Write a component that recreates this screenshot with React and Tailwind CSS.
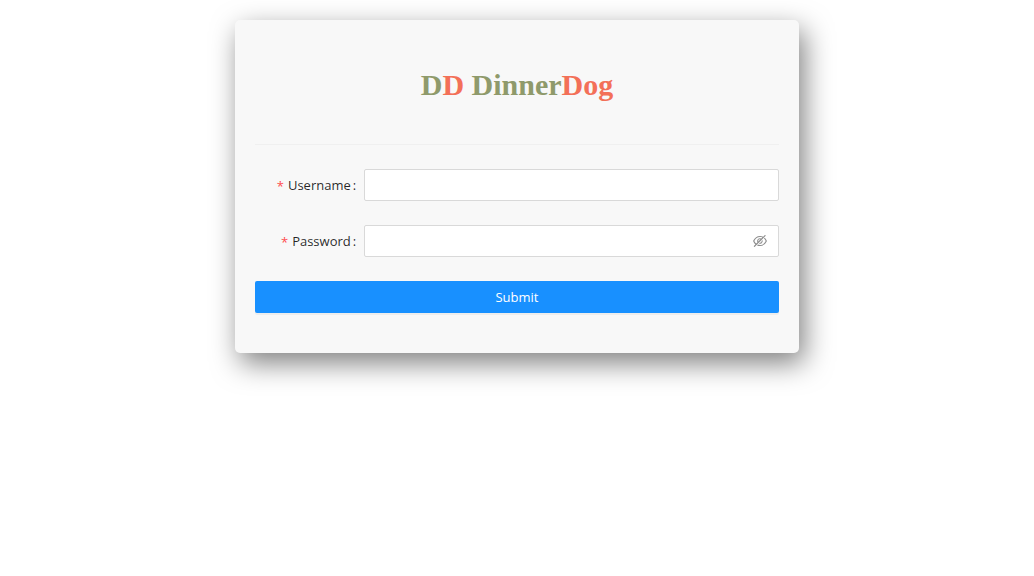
import { AiOutlineEyeInvisible } from "react-icons/ai";

function Field({ id, label, type, children }) {
  return (
    <div className="mb-6 flex items-center">
      <label htmlFor={id} className="flex w-5/24 shrink-0 items-center justify-end pt-0.5 pr-2 whitespace-nowrap">
        <span className="mt-0.5 mr-1 text-[#ff4d4f]" aria-hidden="true">*</span>
        {label}
        <span className="ml-0.5">:</span>
      </label>
      <div className="flex h-8 grow items-center rounded-xs border border-[#d9d9d9] bg-white px-[10px]">
        <input id={id} type={type} required className="min-w-0 grow bg-transparent outline-none" />
        {children}
      </div>
    </div>
  );
}

export default function App() {
  return (
    <main className="flex min-h-screen items-start justify-center p-5 font-['Open_Sans','Noto_Sans',sans-serif] text-[13px] text-black/85">
      <form
        className="w-full max-w-[564px] rounded-[5px] bg-[#f8f8f8] px-5 pt-10 pb-10 shadow-[5px_10px_28px_rgba(0,0,0,0.5)]"
        onSubmit={(e) => e.preventDefault()}
      >
        <h1 className="pt-1 text-center font-['Liberation_Serif',serif] text-[30px] leading-[42px] font-bold text-[#8f9a6b]">
          D<span className="text-[#f37058]">D</span> Dinner<span className="text-[#f37058]">Dog</span>
        </h1>
        <hr className="mt-[38px] mb-6 border-[#f0f0f0]" />
        <Field id="username" label="Username" type="text" />
        <Field id="password" label="Password" type="password">
          <button type="button" aria-label="Show password" className="ml-1 text-black/45">
            <AiOutlineEyeInvisible size={16} />
          </button>
        </Field>
        <button type="submit" className="h-8 w-full rounded-xs bg-[#1890ff] pt-0.5 text-white shadow-[0_2px_0_rgba(0,0,0,0.045)]">
          Submit
        </button>
      </form>
    </main>
  );
}
